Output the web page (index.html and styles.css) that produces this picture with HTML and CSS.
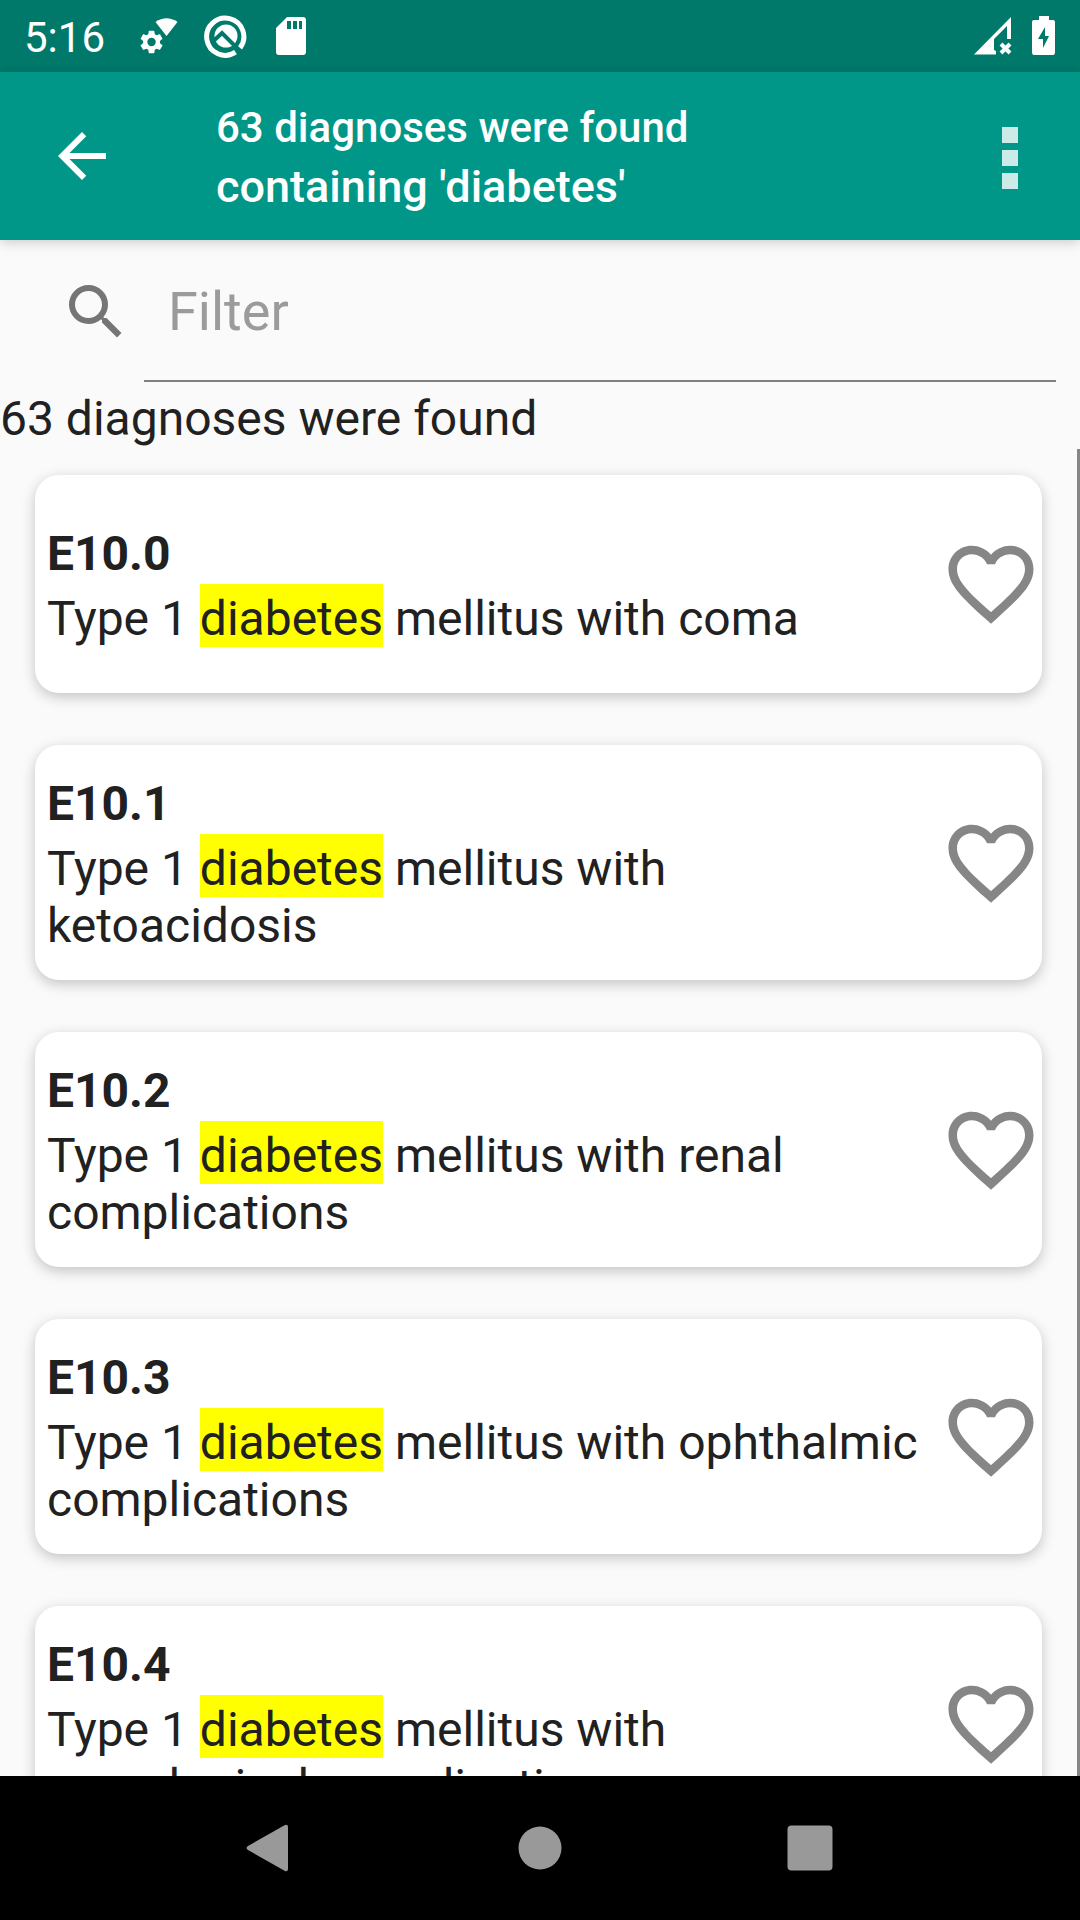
FILE: index.html
```html
<!DOCTYPE html>
<html lang="en">
<head>
  <meta charset="UTF-8" />
  <meta name="viewport" content="width=device-width, initial-scale=1.0" />
  <title>Diagnoses</title>
  <link rel="stylesheet" href="styles.css">
</head>
<body>
  <!-- shared icon -->
  <svg class="sprite" aria-hidden="true">
    <symbol id="heart" viewBox="0 0 24 24">
      <path d="M16.5 3c-1.74 0-3.41.81-4.5 2.09C10.91 3.81 9.24 3 7.5 3 4.42 3 2 5.42 2 8.5c0 3.78 3.4 6.86 8.55 11.54L12 21.35l1.45-1.32C18.6 15.36 22 12.28 22 8.5 22 5.42 19.58 3 16.5 3zm-4.4 15.55l-.1.1-.1-.1C7.14 14.24 4 11.39 4 8.5 4 6.5 5.5 5 7.5 5c1.54 0 3.04.99 3.57 2.36h1.87C13.46 5.99 14.96 5 16.5 5c2 0 3.5 1.5 3.5 3.5 0 2.89-3.14 5.74-7.9 10.05z"/>
    </symbol>
  </svg>

  <!-- status bar -->
  <div class="status-bar">
    <span class="clock">5:16</span>
    <div class="status-icons">
      <svg width="48" height="48" viewBox="0 0 48 48">
        <path transform="translate(.5 16) scale(1.17)" fill-rule="evenodd" d="M19.14 12.94c.04-.3.06-.61.06-.94 0-.32-.02-.64-.07-.94l2.03-1.58c.18-.14.23-.41.12-.61l-1.92-3.32c-.12-.22-.37-.29-.59-.22l-2.39.96c-.5-.38-1.03-.7-1.62-.94l-.36-2.54c-.04-.24-.24-.41-.48-.41h-3.84c-.24 0-.43.17-.47.41l-.36 2.54c-.59.24-1.13.57-1.62.94l-2.39-.96c-.22-.08-.47 0-.59.22L2.74 8.87c-.12.21-.08.47.12.61l2.03 1.58c-.05.3-.09.63-.09.94s.02.64.07.94l-2.03 1.58c-.18.14-.23.41-.12.61l1.92 3.32c.12.22.37.29.59.22l2.39-.96c.5.38 1.03.7 1.62.94l.36 2.54c.05.24.24.41.48.41h3.84c.24 0 .44-.17.47-.41l.36-2.54c.59-.24 1.13-.56 1.62-.94l2.39.96c.22.08.47 0 .59-.22l1.92-3.32c.12-.22.07-.47-.12-.61l-2.01-1.58zM12 15.6a3.6 3.6 0 1 1 0-7.2 3.6 3.6 0 0 1 0 7.2z"/>
        <path d="M18.5 10Q29.5 2.500 40.500 10L29.500 24z"/>
      </svg>
      <svg width="48" height="48" viewBox="0 0 48 48">
        <path class="ring" d="M33.5 40.2A18.6 18.6 0 1 1 38 36"/>
        <circle cx="24" cy="24" r="11.5"/>
        <path class="ring-cut" d="M12 28.500l8-7.500 18 18"/>
      </svg>
      <svg width="48" height="48" viewBox="0 0 48 48">
        <path fill-rule="evenodd" d="M20 5h16q3 0 3 3v32q0 3-3 3H12q-3 0-3-3V16zM20 9v8h4V9zM26 9v8h4V9zM32 9v8h3V9z"/>
      </svg>
    </div>
    <div class="status-right">
      <svg width="48" height="48" viewBox="0 0 48 48">
        <path d="M43 5V27h-4V14L26 27V38l2 1v3.500H6z"/>
        <path class="no-signal" d="M33 32l9 9M42 32l-9 9"/>
      </svg>
      <svg width="24" height="48" viewBox="0 0 24 48">
        <path fill-rule="evenodd" d="M7 4h10v4h4q2 0 2 2v30q0 3-2 3H2q-2 0-2-3V10q0-2 2-2h5zM13 15L6 27h5v9l6-12h-4z"/>
      </svg>
    </div>
  </div>

  <!-- app bar -->
  <header class="app-bar">
    <button class="back-btn" aria-label="Back">
      <svg width="72" height="72" viewBox="0 0 24 24"><path d="M20 11H7.830l5.590-5.590L12 4l-8 8 8 8 1.410-1.410L7.830 13H20v-2z"/></svg>
    </button>
    <h1>63 diagnoses were found <span class="term">containing 'diabetes'</span></h1>
    <button class="menu-btn" aria-label="More options">
      <span></span><span></span><span></span>
    </button>
  </header>

  <!-- filter -->
  <div class="filter">
    <label for="filter" aria-label="Filter">
      <svg width="72" height="72" viewBox="0 0 24 24"><path d="M15.500 14h-.79l-.28-.27A6.471 6.471 0 0 0 16 9.500 6.500 6.500 0 1 0 9.500 16c1.610 0 3.090-.59 4.230-1.570l.27.28v.79l5 4.990L20.490 19l-4.990-5zm-6 0C7.010 14 5 11.990 5 9.500S7.010 5 9.500 5 14 7.010 14 9.500 11.990 14 9.500 14z"/></svg>
    </label>
    <input type="text" id="filter" placeholder="Filter" />
  </div>
  <p class="count">63 diagnoses were found</p>

  <!-- results -->
  <main class="list">
    <article class="card">
      <div class="card-text">
        <h2>E10.0</h2>
        <p>Type 1 <mark>diabetes</mark> mellitus with coma</p>
      </div>
      <button class="fav-btn" aria-label="Favourite E10.0"><svg><use href="#heart"/></svg></button>
    </article>
    <article class="card">
      <div class="card-text">
        <h2>E10.1</h2>
        <p>Type 1 <mark>diabetes</mark> mellitus with ketoacidosis</p>
      </div>
      <button class="fav-btn" aria-label="Favourite E10.1"><svg><use href="#heart"/></svg></button>
    </article>
    <article class="card">
      <div class="card-text">
        <h2>E10.2</h2>
        <p>Type 1 <mark>diabetes</mark> mellitus with renal complications</p>
      </div>
      <button class="fav-btn" aria-label="Favourite E10.2"><svg><use href="#heart"/></svg></button>
    </article>
    <article class="card">
      <div class="card-text">
        <h2>E10.3</h2>
        <p>Type 1 <mark>diabetes</mark> mellitus with ophthalmic complications</p>
      </div>
      <button class="fav-btn" aria-label="Favourite E10.3"><svg><use href="#heart"/></svg></button>
    </article>
    <article class="card">
      <div class="card-text">
        <h2>E10.4</h2>
        <p>Type 1 <mark>diabetes</mark> mellitus with neurological complications</p>
      </div>
      <button class="fav-btn" aria-label="Favourite E10.4"><svg><use href="#heart"/></svg></button>
    </article>
  </main>

  <!-- system navigation -->
  <nav class="nav-bar">
    <button aria-label="Back"><svg width="48" height="48" viewBox="0 0 48 48"><path d="M2 22L39 1q3-1 3 2v42q0 3-3 2L2 26q-3-2 0-4z"/></svg></button>
    <button aria-label="Home"><svg width="48" height="48" viewBox="0 0 48 48"><circle cx="24" cy="24" r="21.500"/></svg></button>
    <button aria-label="Recent apps"><svg width="48" height="48" viewBox="0 0 48 48"><rect x="1.500" y="1.500" width="45" height="45" rx="4"/></svg></button>
  </nav>
</body>
</html>
```
FILE: styles.css
```css
* {
  box-sizing: border-box;
}
body {
  margin: 0;
  height: 100vh;
  display: flex;
  flex-direction: column;
  overflow: hidden;
  font-family: Roboto, sans-serif;
  font-size: 48px;
  line-height: 57px;
  color: #212121;
  background: #fafafa;
}
h1, h2, p {
  margin: 0;
}
button {
  padding: 0;
  border: none;
  background: none;
  cursor: pointer;
}
svg {
  display: block;
  fill: currentColor;
}
.sprite {
  position: absolute;
  width: 0;
  height: 0;
}

/* status bar */
.status-bar {
  flex: none;
  display: flex;
  align-items: center;
  height: 72px;
  padding: 0 24px;
  background: #00796b;
  color: #fff;
}
.clock {
  padding-top: 2px;
  font-size: 42px;
}
.status-icons {
  display: flex;
  gap: 17px;
  margin-left: 32px;
}
.status-right {
  display: flex;
  gap: 16px;
  margin-left: auto;
}
.ring {
  fill: none;
  stroke: #fff;
  stroke-width: 5;
}
.ring-cut {
  fill: none;
  stroke: #00796b;
  stroke-width: 4;
}
.no-signal {
  stroke: #fff;
  stroke-width: 4;
}

/* app bar */
.app-bar {
  flex: none;
  display: flex;
  align-items: center;
  height: 168px;
  padding: 0 60px 0 46px;
  background: #009688;
  color: #fff;
  box-shadow: 0 2px 12px rgba(0,0,0,0.2);
}
.back-btn {
  color: #fff;
}
.app-bar h1 {
  flex: 1;
  margin-left: 98px;
  padding-top: 2px;
  font-size: 42px;
  font-weight: 500;
  line-height: 59px;
}
.term {
  display: block;
  font-size: 45px;
}
.menu-btn {
  display: flex;
  flex-direction: column;
  gap: 7px;
  padding: 4px 2px 0;
}
.menu-btn span {
  width: 16px;
  height: 16px;
  background: rgba(255,255,255,0.8);
}

/* filter */
.filter {
  flex: none;
  display: flex;
  align-items: center;
  gap: 12px;
  padding: 2px 24px 7px 60px;
  color: #757575;
}
.filter input {
  flex: 1;
  min-width: 0;
  height: 140px;
  padding: 0 24px;
  border: none;
  border-bottom: 2px solid #808080;
  background: none;
  color: #212121;
  font-family: inherit;
  font-size: 54px;
  outline: none;
}
.filter input::placeholder {
  color: #9b9b9b;
}
.count {
  flex: none;
  padding: 1px 0 2px;
}

/* results */
.list {
  position: relative;
  flex: 1;
  min-height: 0;
  overflow: hidden;
  padding: 26px 38px 26px 35px;
}
/* scroll indicator */
.list::after {
  content: "";
  position: absolute;
  top: 0;
  right: 0;
  bottom: 0;
  width: 3px;
  background: #868686;
}
.card {
  display: flex;
  align-items: center;
  min-height: 218px;
  margin-bottom: 52px;
  background: #fff;
  border-radius: 24px;
  box-shadow: 0 4px 14px rgba(0,0,0,0.22);
}
.card-text {
  flex: 1;
  padding: 30px 12px 26px 12px;
}
.card h2 {
  margin-bottom: 8px;
  font-size: 48px;
  font-weight: 700;
}
mark {
  padding-top: 6px;
  background: #ff0;
  color: inherit;
}
.fav-btn {
  color: #868686;
}
.fav-btn svg {
  width: 102px;
  height: 102px;
}

/* system navigation */
.nav-bar {
  position: relative;
  flex: none;
  display: flex;
  justify-content: center;
  align-items: center;
  gap: 222px;
  height: 144px;
  background: #000;
}
.nav-bar button {
  color: #999;
}
```
